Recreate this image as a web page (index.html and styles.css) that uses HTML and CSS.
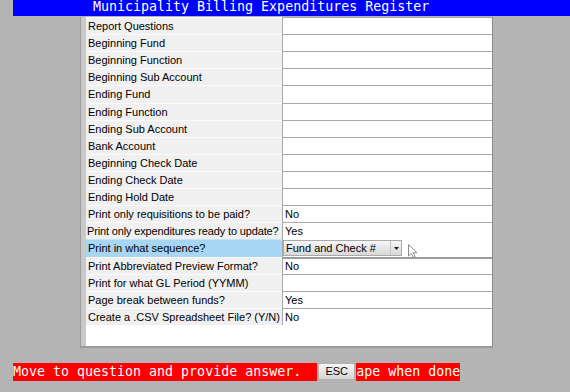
FILE: index.html
```html
<!DOCTYPE html>
<html>
<head>
<meta charset="utf-8">
<title>Municipality Billing Expenditures Register</title>
<link rel="stylesheet" href="styles.css">
</head>
<body>
<div class="screen">
  <div class="title">Municipality Billing Expenditures Register</div>
  <div class="panel">
    <div class="row"><div class="label">Report Questions</div><div class="value"></div></div>
    <div class="row"><div class="label">Beginning Fund</div><div class="value"></div></div>
    <div class="row"><div class="label">Beginning Function</div><div class="value"></div></div>
    <div class="row"><div class="label">Beginning Sub Account</div><div class="value"></div></div>
    <div class="row"><div class="label">Ending Fund</div><div class="value"></div></div>
    <div class="row"><div class="label">Ending Function</div><div class="value"></div></div>
    <div class="row"><div class="label">Ending Sub Account</div><div class="value"></div></div>
    <div class="row"><div class="label">Bank Account</div><div class="value"></div></div>
    <div class="row"><div class="label">Beginning Check Date</div><div class="value"></div></div>
    <div class="row"><div class="label">Ending Check Date</div><div class="value"></div></div>
    <div class="row"><div class="label">Ending Hold Date</div><div class="value"></div></div>
    <div class="row"><div class="label">Print only requisitions to be paid?</div><div class="value">No</div></div>
    <div class="row"><div class="label label-tight">Print only expenditures ready to update?</div><div class="value">Yes</div></div>
    <div class="row row-active">
      <div class="label label-active">Print in what sequence?</div>
      <div class="value value-select">
        <div class="select">
          <span class="select-text">Fund and Check #</span>
          <span class="select-btn"><svg width="5" height="3" viewBox="0 0 5 3"><path d="M0 0h5L2.5 3z" fill="#222"/></svg></span>
        </div>
      </div>
    </div>
    <div class="row"><div class="label">Print Abbreviated Preview Format?</div><div class="value value-strong">No</div></div>
    <div class="row"><div class="label">Print for what GL Period (YYMM)</div><div class="value"></div></div>
    <div class="row"><div class="label">Page break between funds?</div><div class="value">Yes</div></div>
    <div class="row"><div class="label">Create a .CSV Spreadsheet File? (Y/N)</div><div class="value">No</div></div>
    <div class="filler"></div>
  </div>
  <div class="status">
    <span class="msg">Move to question and provide answer.  </span><span class="esc">ESC</span><span class="msg">ape when done</span>
  </div>
  <svg class="cursor" width="12" height="15" viewBox="0 0 12 15"><path d="M0.5 0.5 L0.5 12 L3.3 9.4 L5.3 13.8 L7.2 13 L5.3 8.7 L9 8.7 Z" fill="#fff" stroke="#8a8a8a" stroke-width="1" stroke-linejoin="round"/></svg>
</div>
</body>
</html>
```
FILE: styles.css
```css
html, body {
  margin: 0;
  padding: 0;
}
body {
  background: #b4b4b4;
  width: 570px;
  height: 392px;
  overflow: hidden;
}
.screen {
  position: relative;
  width: 570px;
  height: 392px;
}
.title {
  margin-left: 13px;
  height: 16px;
  background: #0000ff;
  color: #ffffff;
  font-family: "DejaVu Sans Mono", monospace;
  font-size: 13.3px;
  line-height: 14px;
  padding-left: 80px;
  white-space: pre;
}
.panel {
  margin: 1px 0 0 80px;
  width: 413px;
  box-sizing: border-box;
  border-left: 1px solid #9c9c9c;
  border-right: 1px solid #8c8c8c;
  border-bottom: 2px solid #9a9a9a;
  padding-left: 5px;
  background: #c9c9c9;
}
.row {
  display: grid;
  grid-template-columns: 196px 210px;
  height: 17.12px;
  font-family: "Liberation Sans", Arial, sans-serif;
  font-size: 11px;
  color: #000;
}
.label {
  background: #f0f0f0;
  border-top: 1px solid #fbfbfb;
  padding-left: 2px;
  line-height: 16px;
  white-space: nowrap;
  overflow: hidden;
}
.label-tight {
  letter-spacing: -0.15px;
  padding-left: 1px;
}
.label-active {
  background: #a6d6f2;
  border-top-color: #c4e4f7;
}
.value {
  background: #ffffff;
  border-left: 1px solid #a8a8a8;
  border-top: 1px solid #a8a8a8;
  padding-left: 2px;
  line-height: 16px;
  white-space: nowrap;
}
.value-select {
  border-top: none;
  padding: 1px 0 0 0;
}
.value-strong {
  border-top: 2px solid #9c9c9c;
  line-height: 15px;
}
.select {
  display: flex;
  width: 119px;
  height: 16px;
  box-sizing: border-box;
  border: 1px solid #a9a9a9;
  background: linear-gradient(#f7f7f7, #e6e6e6 50%, #d9d9d9);
}
.select-text {
  flex: 1;
  padding-left: 2px;
  line-height: 14px;
}
.select-btn {
  width: 10px;
  border-left: 1px solid #c4c4c4;
  display: flex;
  align-items: center;
  justify-content: center;
}
.filler {
  height: 21px;
  background: #ffffff;
}
.status {
  display: flex;
  align-items: center;
  margin: 15px 0 0 13px;
  height: 18px;
}
.msg {
  background: #ff0000;
  color: #ffffff;
  font-family: "DejaVu Sans Mono", monospace;
  font-size: 13.3px;
  line-height: 18px;
  white-space: pre;
}
.esc {
  width: 37px;
  height: 17px;
  box-sizing: border-box;
  margin: 0 1px;
  border: 1px solid #b0b0b0;
  border-radius: 2px;
  background: linear-gradient(#f6f6f6, #e4e4e4 55%, #d6d6d6);
  font-family: "Liberation Sans", Arial, sans-serif;
  font-size: 11px;
  line-height: 15px;
  text-align: center;
  color: #000;
}
.cursor {
  position: absolute;
  left: 408px;
  top: 244px;
}
```
